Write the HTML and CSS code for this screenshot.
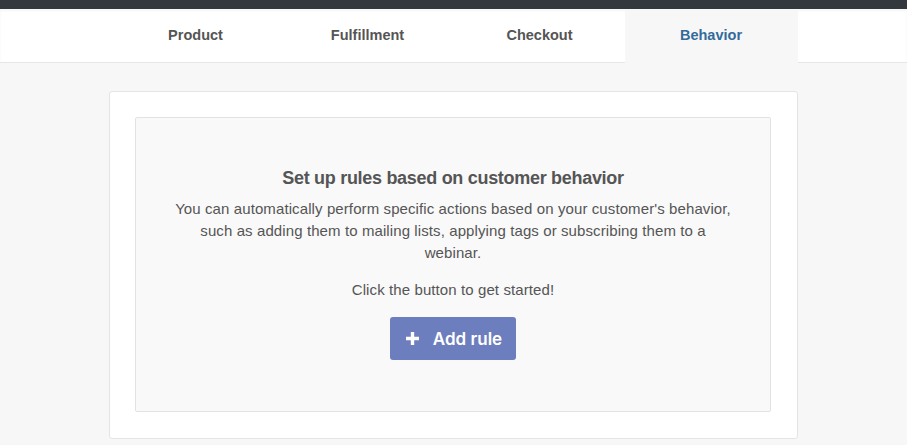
FILE: index.html
```html
<!DOCTYPE html>
<html>
<head>
<meta charset="utf-8">
<link rel="stylesheet" href="styles.css">
</head>
<body>
<div class="topbar"></div>
<nav class="nav">
  <div class="tabs">
    <div class="tab">Product</div>
    <div class="tab">Fulfillment</div>
    <div class="tab">Checkout</div>
    <div class="tab active">Behavior</div>
  </div>
</nav>
<main class="main">
  <div class="card">
    <div class="empty">
      <h2 class="title">Set up rules based on customer behavior</h2>
      <p class="desc">You can automatically perform specific actions based on your customer's behavior, such as adding them to mailing lists, applying tags or subscribing them to a webinar.</p>
      <p class="hint">Click the button to get started!</p>
      <button class="btn">
        <svg class="plus" width="15" height="15" viewBox="0 0 15 15"><path d="M7.5 1v13M1 7.5h13" stroke="#fff" stroke-width="3.4" stroke-linecap="butt"/></svg>
        <span>Add rule</span>
      </button>
    </div>
  </div>
</main>
</body>
</html>
```
FILE: styles.css
```css
* { box-sizing: border-box; }
html, body { margin: 0; padding: 0; }
body {
  background: #f7f7f7;
  font-family: "Liberation Sans", Arial, sans-serif;
  color: #555;
  height: 445px;
  overflow: hidden;
}
.topbar { height: 9px; background: #33383f; }
.nav {
  background: #fff;
  border-bottom: 1px solid #e6e6e6;
  height: 54px;
  box-shadow: inset 0 2px 3px rgba(0,0,0,0.04);
}
.tabs {
  width: 688px;
  margin: 0 auto;
  display: grid;
  grid-template-columns: repeat(4, 1fr);
  height: 54px;
}
.tab {
  display: flex;
  align-items: center;
  justify-content: center;
  font-size: 14.5px;
  font-weight: bold;
  color: #555;
  height: 51px;
}
.tab.active {
  background: #f7f7f7;
  color: #336b9b;
  height: 54px;
  padding-bottom: 3px;
  margin-left: -1px;
}
.main { padding-top: 28px; }
.card {
  width: 689px;
  margin: 0 auto;
  background: #fff;
  border: 1px solid #e4e4e4;
  border-radius: 3px;
  padding: 25px 26px 26px 25px;
}
.empty {
  height: 295px;
  background: #f9f9f9;
  border: 1px solid #e2e2e2;
  border-radius: 2px;
  display: flex;
  flex-direction: column;
  align-items: center;
  padding-top: 48px;
  text-align: center;
}
.title {
  margin: 0;
  font-size: 18px;
  font-weight: bold;
  color: #555;
  line-height: 24px;
  letter-spacing: -0.3px;
}
.desc {
  margin: 8px 0 0;
  max-width: 562px;
  font-size: 15px;
  letter-spacing: 0.1px;
  line-height: 22px;
  color: #555;
}
.hint {
  margin: 15px 0 0;
  font-size: 15px;
  letter-spacing: 0.1px;
  line-height: 22px;
  color: #555;
}
.btn {
  margin-top: 16px;
  width: 126px;
  height: 43px;
  background: #6d7ebe;
  border: none;
  border-radius: 3px;
  color: #fff;
  font-family: Inter, "Liberation Sans", sans-serif;
  font-size: 17px;
  font-weight: 600;
  display: flex;
  align-items: center;
  justify-content: center;
  gap: 13px;
  padding: 0 0 0 1px;
}
.plus { display: block; }
```
